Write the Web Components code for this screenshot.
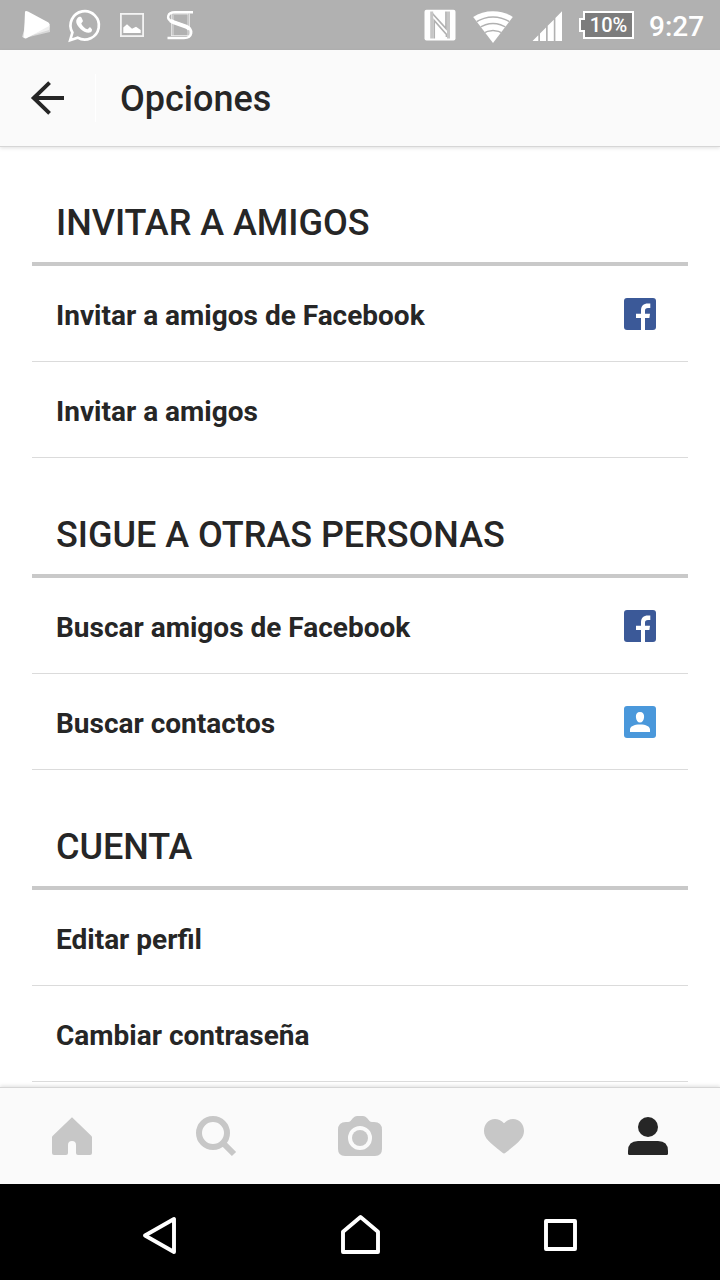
<!DOCTYPE html>
<html lang="es">
<head>
<meta charset="utf-8">
<title>Opciones</title>
<style>
html,body{margin:0;height:100%;overflow:hidden;background:#fff}
</style>
</head>
<body>
<options-screen></options-screen>
<script>
const define = (name, html) => {
  const template = document.createElement('template');
  template.innerHTML = html;
  customElements.define(name, class extends HTMLElement {
    constructor() {
      super();
      this.attachShadow({mode: 'open'}).append(template.content.cloneNode(true));
    }
  });
};

// name: [viewBox, markup]; width and height follow the viewBox
const ICONS = {
  play: ['12 0 48 50', '<path opacity=".5" d="M22 37L27 20L50 25.500L50 32L26 37.800Z"/><path opacity=".6" d="M23 38L26 15L50 24L49 30Z"/><path d="M25 11.500Q26 10.500 28 11.500L48.500 22.500Q50 23.500 49 26L26 38.500Q23.500 39 24 36Z"/>'],
  whatsapp: ['61 0 48 50', '<path fill="none" stroke="currentColor" stroke-width="2.700" d="M71.200 40.200L73.400 32.500A14.200 14.200 0 1 1 78.600 37.700Z"/><path d="M80.300 16.800C81.500 16.600 82.300 16.900 82.700 18L83.900 20.800C84.200 21.800 82.300 22.900 82.300 23.700C83.500 26.300 85.600 28.200 88.300 29.300C89.300 29.300 90.200 26.900 91.200 27.200L92.500 28.800C93.500 29.300 93 31.700 91.800 32.200C89 33.500 84.500 32 81.500 29C79 26.500 76.900 24 77.200 20.800C77.500 18.900 79 17.200 80.300 16.800Z"/>'],
  picture: ['108 0 48 50', '<rect x="120.900" y="13.900" width="22.200" height="22.200" fill="none" stroke="currentColor" stroke-width="1.800" opacity=".85"/><path d="M123.300 33V27.500L127 24.200L132 28.700L136 26.700L140.700 30V33Z"/>'],
  script: ['156 0 48 50', '<path fill="none" stroke="currentColor" stroke-width="1" opacity=".6" d="M171.500 14V35.500M173 14V35.500M188 13.500V35.500M189.500 13.500V35.500M171 35.500H190M174 14H188"/><path fill="none" stroke="currentColor" stroke-width="2.400" d="M193 12.300H175C167 12.300 166 19 172 21.500L186 26.500C194 29.500 192.500 38 184 38H167.500"/><path fill="none" stroke="currentColor" stroke-width="4" d="M170.500 20.500Q172 21.700 174 22.300L186 26.700Q188 27.500 189.500 29.200"/>'],
  nfc: ['420 0 40 50', '<rect x="424.500" y="9.700" width="31" height="30.700" rx="2"/><path fill="none" stroke="#b1b1b1" stroke-width="1.700" d="M434.200 38.500V20.500L446.500 34.500V37M446 11.500V28.500L431.500 12.500"/><path fill="none" stroke="#c6c6c6" stroke-width="3" d="M431.700 11.500V38.500M448.500 11.500V38.500"/>'],
  wifi: ['468 0 50 50', '<clipPath id="fan"><path d="M493 43L473.200 17C484 9.200 502 9.200 512.800 17Z"/></clipPath><g clip-path="url(#fan)"><path d="M470 5H516V45H470Z"/><g fill="none" stroke="#b1b1b1" stroke-width="1.500"><path d="M475 22.500Q493 11.500 511 22.500M478 28.500Q493 18.500 508 28.500M482 34Q493 27 504 34"/></g></g>'],
  signal: ['528 0 38 50', '<path d="M532.500 41L538.300 35.200V41ZM540 33.500L546 27.500V41H540ZM547.700 25.800L553.800 19.700V41H547.700ZM555.400 18.100L562 11.300V41H555.400Z"/>'],
  back: ['28 79 40 38', '<path fill="none" stroke="currentColor" stroke-width="3.900" d="M64 98H33.500M49.600 82.600L33.700 98L49.600 113.400"/>'],
  facebook: ['624 298 32 32', '<rect x="624" y="298" width="32" height="32" rx="3" fill="#3b5998"/><path fill="#fff" d="M641 330V318H636V313.700H641V310.500C641 306 643.500 303.500 648 303.500H650.300V308H648C645.800 308 645 309 645 310.800V313.700H650L649.400 318H645V330Z"/>'],
  contact: ['624 706 32 32', '<rect x="624" y="706" width="32" height="32" rx="3" fill="#4a98db"/><path fill="#fff" d="M640 712C643 712 644.300 714 644.100 717C643.900 720.500 642.300 722.500 640 722.500S636.100 720.500 635.900 717C635.700 714 637 712 640 712ZM630 732V729.500C630 726.500 634 724.500 640 724.500S650 726.500 650 729.500V732Z"/>'],
  home: ['48 1112 48 48', '<path d="M72 1117.300L91.200 1135.700Q92 1136.500 92 1137.500V1153Q92 1155 90 1155H78Q76 1155 76 1153V1145A4 4 0 0 0 68 1145V1153Q68 1155 66 1155H54Q52 1155 52 1153V1137.500Q52 1136.500 52.800 1135.700Z"/>'],
  search: ['192 1112 48 48', '<g fill="none" stroke="currentColor" stroke-width="6"><circle cx="213" cy="1133" r="14"/><path d="M223 1143L234 1154"/></g>'],
  camera: ['336 1112 48 48', '<path fill-rule="evenodd" d="M346 1122H348Q349.500 1122 350.500 1121L353 1118Q355 1116 357 1116H363Q365 1116 367 1118L369.500 1121Q370.500 1122 372 1122H374Q382 1122 382 1130V1149Q382 1156 375 1156H345Q338 1156 338 1149V1130Q338 1122 346 1122ZM360 1126A12 12 0 1 0 360 1150A12 12 0 1 0 360 1126Z"/><circle cx="360" cy="1138" r="8"/>'],
  heart: ['480 1112 48 48', '<path d="M504 1123.300C507 1120 510 1119 513 1119C519.500 1119 524 1124 524 1131C524 1138 519 1142 505.500 1152.800Q504 1154 502.500 1152.800C489 1142 484 1138 484 1131C484 1124 488.500 1119 495 1119C498 1119 501 1120 504 1123.300Z"/>'],
  person: ['624 1112 48 48', '<circle cx="648" cy="1127" r="10"/><path d="M628 1153.500V1151Q628 1141 638 1141H658Q668 1141 668 1151V1153.500Q668 1155 666.500 1155H629.500Q628 1155 628 1153.500Z"/>'],
  sysback: ['140 1210 40 46', '<path fill="none" stroke="currentColor" stroke-width="3.900" stroke-linejoin="round" d="M174 1219V1252L145 1235.500Z"/>'],
  syshome: ['337 1210 46 46', '<path fill="none" stroke="currentColor" stroke-width="3.900" stroke-linejoin="round" d="M343 1252V1231.800L360.500 1217L378 1231.800V1252Z"/>'],
  recent: ['540 1210 40 46', '<rect x="546" y="1221" width="29" height="28" fill="none" stroke="currentColor" stroke-width="3.900" stroke-linejoin="round"/>']
};

customElements.define('ui-icon', class extends HTMLElement {
  constructor() {
    super();
    this.attachShadow({mode: 'open'});
  }
  connectedCallback() {
    const [box, art] = ICONS[this.getAttribute('name')];
    const [, , w, h] = box.split(' ');
    this.shadowRoot.innerHTML = `<style>:host{display:block;flex:none}svg{display:block;fill:currentColor}</style>
      <svg width="${w}" height="${h}" viewBox="${box}" aria-hidden="true">${art}</svg>`;
  }
});

define('battery-level', `<style>
  :host{display:flex;align-items:center;flex:none}
  i{box-sizing:border-box;width:6px;height:14px;border:2px solid #fff;border-right:0;background:#7c7c7c;margin-right:-2px;z-index:1}
  b{box-sizing:border-box;width:51px;height:28px;border:2px solid #fff;background:#7c7c7c;font:500 20px/24px Roboto,sans-serif;text-align:center}
  </style><i></i><b><slot></slot></b>`);

define('status-bar', `<style>
  :host{display:flex;box-sizing:border-box;height:50px;align-items:center;background:#b1b1b1;color:#fff;padding:0 16px 0 12px;flex:none}
  .space{flex:1}
  .wifi{margin-left:8px}.signal{margin-left:10px}
  battery-level{margin-left:13px}
  time{width:55px;margin-left:15px;font:500 28px/50px Roboto,sans-serif;white-space:nowrap;padding-top:3px}
  </style>
  <ui-icon name="play"></ui-icon><ui-icon name="whatsapp"></ui-icon><ui-icon name="picture"></ui-icon><ui-icon name="script"></ui-icon>
  <span class="space"></span>
  <ui-icon name="nfc"></ui-icon><ui-icon class="wifi" name="wifi"></ui-icon><ui-icon class="signal" name="signal"></ui-icon>
  <battery-level>10%</battery-level><time>9:27</time>`);

define('app-bar', `<style>
  :host{display:flex;height:96px;align-items:center;background:#fafafa;flex:none;z-index:1;
    box-shadow:0 1px 0 #d6d6d6,0 2px 4px rgba(0,0,0,.13)}
  ui-icon{margin-left:28px}
  .rule{width:1px;height:48px;background:#fff;margin:0 24px 0 27px}
  h1{margin:0;padding-top:2px;font:500 36px/48px Roboto,sans-serif}
  </style>
  <ui-icon name="back"></ui-icon><span class="rule"></span><h1><slot></slot></h1>`);

define('option-section', `<style>
  :host{display:block;margin:0 32px}
  h2{margin:0;box-sizing:border-box;height:120px;padding:53px 24px 0;border-bottom:4px solid #c9c9c9;font:500 36px/48px Roboto,sans-serif;letter-spacing:-.03px;white-space:nowrap}
  </style><h2><slot name="title"></slot></h2><slot></slot>`);

define('option-row', `<style>
  :host{display:flex;box-sizing:border-box;height:96px;align-items:center;justify-content:space-between;padding:0 32px 0 24px;border-bottom:1px solid #dbdbdb;font:700 28px/36px Roboto,sans-serif;white-space:nowrap}
  span{padding-top:5px}
  </style><span><slot></slot></span><slot name="icon"></slot>`);

define('tab-bar', `<style>
  :host{display:flex;height:96px;flex:none;background:#fafafa;color:#c7c7c7;z-index:1;
    box-shadow:0 -1px 0 #d6d6d6,0 -2px 4px rgba(0,0,0,.13)}
  ::slotted(*){flex:1!important;display:flex!important;align-items:center;justify-content:center}
  ::slotted([selected]){color:#262626}
  </style><slot></slot>`);

define('system-nav', `<style>
  :host{display:flex;box-sizing:border-box;height:96px;flex:none;background:#000;color:#fff;justify-content:space-between;align-items:center;padding:6px 140px 4px}
  </style><ui-icon name="sysback"></ui-icon><ui-icon name="syshome"></ui-icon><ui-icon name="recent"></ui-icon>`);

define('options-screen', `<style>
  :host{display:flex;flex-direction:column;width:720px;height:1280px;background:#fff;color:#262626;font-family:Roboto,sans-serif}
  main{flex:1;min-height:0;overflow:hidden}
  </style>
  <status-bar></status-bar>
  <app-bar>Opciones</app-bar>
  <main>
    <option-section><span slot="title">INVITAR A AMIGOS</span>
      <option-row>Invitar a amigos de Facebook<ui-icon slot="icon" name="facebook"></ui-icon></option-row>
      <option-row>Invitar a amigos</option-row>
    </option-section>
    <option-section><span slot="title">SIGUE A OTRAS PERSONAS</span>
      <option-row>Buscar amigos de Facebook<ui-icon slot="icon" name="facebook"></ui-icon></option-row>
      <option-row>Buscar contactos<ui-icon slot="icon" name="contact"></ui-icon></option-row>
    </option-section>
    <option-section><span slot="title">CUENTA</span>
      <option-row>Editar perfil</option-row>
      <option-row>Cambiar contraseña</option-row>
    </option-section>
  </main>
  <tab-bar>
    <ui-icon name="home"></ui-icon><ui-icon name="search"></ui-icon><ui-icon name="camera"></ui-icon><ui-icon name="heart"></ui-icon><ui-icon name="person" selected></ui-icon>
  </tab-bar>
  <system-nav></system-nav>`);
</script>
</body>
</html>
